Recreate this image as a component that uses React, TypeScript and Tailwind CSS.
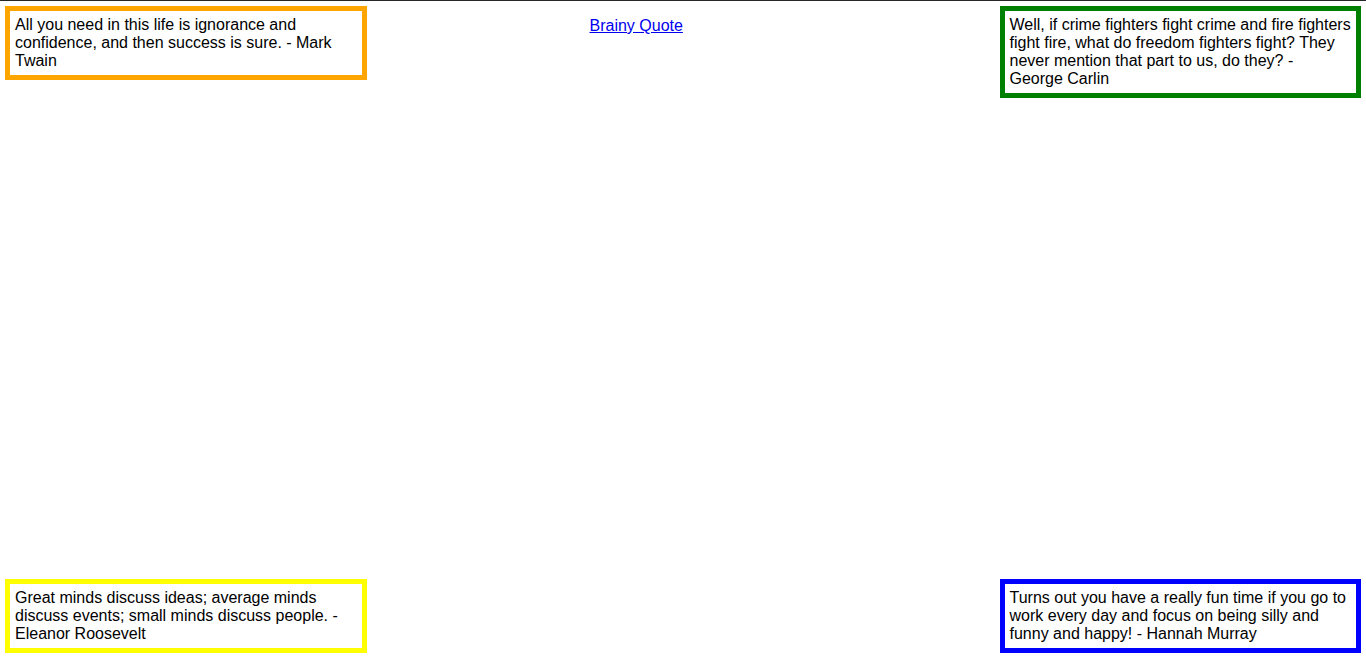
import React from 'react';

const quotes = {
  topLeft: 'All you need in this life is ignorance and confidence, and then success is sure. - Mark Twain',
  topRight:
    'Well, if crime fighters fight crime and fire fighters fight fire, what do freedom fighters fight? They never mention that part to us, do they? - George Carlin',
  bottomLeft: 'Great minds discuss ideas; average minds discuss events; small minds discuss people. - Eleanor Roosevelt',
  bottomRight:
    'Turns out you have a really fun time if you go to work every day and focus on being silly and funny and happy! - Hannah Murray',
};

function QuoteBox({ text, className }: { text: string; className: string }) {
  return (
    <div className={`w-1/4 box-content shrink-0 border-[5px] p-[5px] bg-white text-black ${className}`}>
      {text}
    </div>
  );
}

export default function App() {
  return (
    <div
      className="h-[658px] flex flex-col justify-between border-t border-[#262626] bg-white text-[16px] leading-[normal]"
      style={{ fontFamily: '"Liberation Sans", Arial, sans-serif' }}
    >
      {/* Top row */}
      <div className="flex items-start pt-[5px]">
        <QuoteBox text={quotes.topLeft} className="ml-[5px] border-[#ffa500]" />
        <div className="flex-1 pl-[223px] pt-[11px]">
          <a href="#" className="text-[#0000ee] underline">
            Brainy Quote
          </a>
        </div>
        <QuoteBox text={quotes.topRight} className="mr-[5px] border-[#008000]" />
      </div>

      {/* Bottom row */}
      <div className="flex items-end justify-between pb-[5px]">
        <QuoteBox text={quotes.bottomLeft} className="ml-[5px] border-[#ffff00]" />
        <QuoteBox text={quotes.bottomRight} className="mr-[5px] border-[#0000ff]" />
      </div>
    </div>
  );
}
